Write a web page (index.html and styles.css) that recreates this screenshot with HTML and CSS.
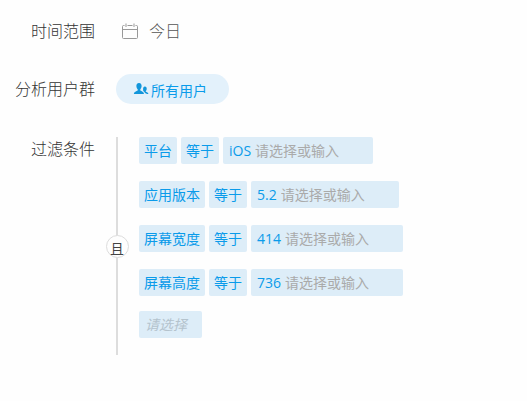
FILE: index.html
```html
<!DOCTYPE html>
<html lang="zh-CN">
<head>
<meta charset="utf-8">
<title>过滤条件</title>
<link rel="stylesheet" href="styles.css">
</head>
<body>
<form class="query">
  <div class="field">
    <span class="label" id="range">时间范围</span>
    <button type="button" class="date" aria-labelledby="range">
      <svg class="calendar" viewBox="0 0 18 16" width="18" height="16" fill="none" stroke="#999">
        <path d="M3.5 2.5H2.5Q1.5 2.5 1.5 3.5V14.5Q1.5 15.5 2.5 15.5H15.5Q16.5 15.5 16.5 14.5V3.5Q16.5 2.5 15.5 2.5H14.5M6.5 2.5H11.5M1.5 6.5H16.5M5 .5V4M13 .5V4"/>
      </svg>
      <span>今日</span>
    </button>
  </div>
  <div class="field">
    <span class="label" id="group">分析用户群</span>
    <button type="button" class="pill" aria-labelledby="group">
      <svg class="users" viewBox="0 0 16 12" width="16" height="12" fill="#1296db">
        <path d="M6 0C7.9 0 8.7 1.4 8.6 3.2C8.5 4.7 7.9 5.6 7.3 6.2V7.4C8.6 8 10.8 8.6 11 11H.8C1 8.6 3.4 8 4.7 7.4V6.2C4 5.6 3.5 4.7 3.4 3.2C3.3 1.4 4.1 0 6 0Z"/>
        <path d="M11.9 3.6C13.2 3.6 13.8 4.6 13.7 5.9C13.6 7 13.2 7.6 12.8 8V8.8C13.8 9.2 15.2 9.7 15.4 11H14L12 10L11.4 8.9L10.3 8C10.1 7.5 10.1 6.6 10.1 5.9C10.1 4.6 10.7 3.6 11.9 3.6Z"/>
      </svg>
      <span>所有用户</span>
    </button>
  </div>
  <div class="field">
    <span class="label top">过滤条件</span>
    <div class="filters">
      <div class="joint"><button type="button" class="and">且</button></div>
      <div class="body">
        <div class="rules">
          <div class="rule">
            <button type="button" class="chip">平台</button>
            <button type="button" class="chip">等于</button>
            <label class="value"><span>iOS</span><input type="text" placeholder="请选择或输入"></label>
          </div>
          <div class="rule">
            <button type="button" class="chip">应用版本</button>
            <button type="button" class="chip">等于</button>
            <label class="value"><span>5.2</span><input type="text" placeholder="请选择或输入"></label>
          </div>
          <div class="rule">
            <button type="button" class="chip">屏幕宽度</button>
            <button type="button" class="chip">等于</button>
            <label class="value"><span>414</span><input type="text" placeholder="请选择或输入"></label>
          </div>
          <div class="rule">
            <button type="button" class="chip">屏幕高度</button>
            <button type="button" class="chip">等于</button>
            <label class="value"><span>736</span><input type="text" placeholder="请选择或输入"></label>
          </div>
        </div>
        <input class="add" type="text" placeholder="请选择" aria-label="请选择">
      </div>
    </div>
  </div>
</form>
</body>
</html>
```
FILE: styles.css
```css
* { box-sizing: border-box; }

body {
  margin: 0;
  background: #fefefe;
  color: #333;
  font-family: "Open Sans", "Noto Sans CJK SC", sans-serif;
  font-size: 16px;
  line-height: 20px;
}

button, input {
  margin: 0;
  padding: 0;
  border: 0;
  background: none;
  color: inherit;
  font: inherit;
}

.query {
  display: flex;
  flex-direction: column;
  gap: 33px;
  padding-top: 21px;
}

.field {
  display: grid;
  grid-template-columns: 95px 1fr;
  column-gap: 21px;
  align-items: center;
  justify-items: start;
}

.label {
  justify-self: end;
  font-weight: 300;
  white-space: nowrap;
}

.top {
  align-self: start;
  line-height: 24px;
}

.date {
  display: flex;
  align-items: center;
  gap: 10px;
  padding-left: 5px;
  color: #555;
  font-weight: 300;
}

.pill {
  display: flex;
  align-items: center;
  gap: 2px;
  height: 30px;
  padding: 3px 22px 0 17px;
  border-radius: 15px;
  background: #e3f1fb;
  color: #0a9bea;
  font-size: 14px;
}

.users { margin-bottom: 4px; }

.filters { display: flex; }

.joint {
  display: flex;
  align-items: center;
  justify-content: center;
  width: 2px;
  margin-right: 21px;
  background: #ddd;
}

.and {
  flex: none;
  width: 23px;
  height: 23px;
  padding-top: 3px;
  border: 1px solid #ddd;
  border-radius: 50%;
  background: #fefefe;
  color: #444;
  font-size: 14px;
  line-height: 20px;
}

.body {
  display: flex;
  flex-direction: column;
  align-items: flex-start;
  gap: 15px;
  padding-bottom: 17px;
}

.rules {
  display: flex;
  flex-direction: column;
  gap: 17px;
}

.rule {
  display: flex;
  gap: 4px;
}

.chip, .value, .add {
  height: 27px;
  border-radius: 2px;
  background: #ddedf8;
  color: #0a9bea;
  font-size: 14px;
}

.chip {
  padding: 0 5px;
  white-space: nowrap;
}

.value {
  display: flex;
  align-items: center;
  gap: 4px;
  padding-left: 6px;
}

.value input { width: 118px; }

.value input::placeholder {
  color: #aaa;
  opacity: 1;
}

.add {
  width: 63px;
  padding-left: 6px;
  font-style: italic;
}

.add::placeholder {
  color: #b4c3cd;
  opacity: 1;
}
```
